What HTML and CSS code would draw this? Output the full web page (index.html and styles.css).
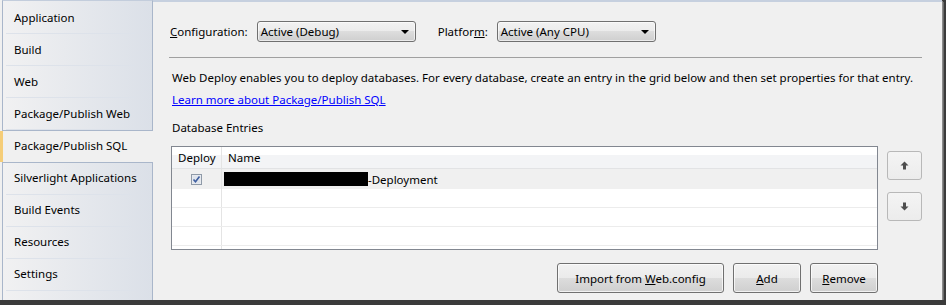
FILE: index.html
```html
<!DOCTYPE html>
<html lang="en">
  <head>
    <title>Package/Publish SQL</title>
    <link rel="stylesheet" href="styles.css">
  </head>
  <body>
    <div class="window">
      <div class="sidebar">
        <div class="tab-group first">
          <div class="tab">Application</div>
          <div class="tab">Build</div>
          <div class="tab">Web</div>
          <div class="tab">Package/Publish Web</div>
        </div>
        <div class="tab selected">Package/Publish SQL</div>
        <div class="tab-group last">
          <div class="tab">Silverlight Applications</div>
          <div class="tab">Build Events</div>
          <div class="tab">Resources</div>
          <div class="tab">Settings</div>
        </div>
      </div>

      <div class="content">
        <div class="config-row">
          <label class="config-label"><u>C</u>onfiguration:</label>
          <div class="combo config-combo">Active (Debug)<span class="combo-arrow"></span></div>
          <label class="config-label platform-label">Platfor<u>m</u>:</label>
          <div class="combo platform-combo">Active (Any CPU)<span class="combo-arrow"></span></div>
        </div>
        <div class="separator"></div>

        <p class="desc">Web Deploy enables you to deploy databases. For every database, create an entry in the grid below and then set properties for that entry.</p>
        <a class="learn-link" href="#">Learn more about Package/Publish SQL</a>
        <div class="section-label">Database Entries</div>

        <div class="grid-area">
          <div class="grid">
            <div class="grid-row header">
              <div class="cell deploy">Deploy</div>
              <div class="cell name">Name</div>
            </div>
            <div class="grid-row current">
              <div class="cell deploy">
                <svg class="checkbox" width="11" height="11" viewBox="0 0 11 11">
                  <rect x="0.5" y="0.5" width="10" height="10" fill="#eef0f3" stroke="#8f9aa8"/>
                  <rect x="1.5" y="1.5" width="8" height="8" fill="#dfe4ec"/>
                  <path d="M2.5 5.5 L4.5 7.8 L8.5 2.5" fill="none" stroke="#3f5fa0" stroke-width="1.6"/>
                </svg>
              </div>
              <div class="cell name"><span class="redacted"></span>-Deployment</div>
            </div>
            <div class="grid-row"><div class="cell deploy"></div><div class="cell name"></div></div>
            <div class="grid-row"><div class="cell deploy"></div><div class="cell name"></div></div>
            <div class="grid-row"><div class="cell deploy"></div><div class="cell name"></div></div>
            <div class="grid-row"><div class="cell deploy"></div><div class="cell name"></div></div>
          </div>
          <div class="move-buttons">
            <button class="move-btn" title="Move up">
              <svg width="9" height="9" viewBox="0 0 9 9"><path d="M4.5 0.5 L8.5 4.5 H6 V8.5 H3 V4.5 H0.5 Z" fill="#4d4d4d"/></svg>
            </button>
            <button class="move-btn" title="Move down">
              <svg width="9" height="9" viewBox="0 0 9 9"><path d="M4.5 8.5 L8.5 4.5 H6 V0.5 H3 V4.5 H0.5 Z" fill="#4d4d4d"/></svg>
            </button>
          </div>
        </div>

        <div class="actions">
          <button class="btn import-btn">Import from <u>W</u>eb.config</button>
          <button class="btn"><u>A</u>dd</button>
          <button class="btn"><u>R</u>emove</button>
        </div>
      </div>
    </div>
  </body>
</html>
```

FILE: styles.css
```css
body {
  margin: 0;
  background-color: #3b3b3b;
  font-family: "Noto Sans", "Open Sans", sans-serif;
  font-size: 11.5px;
  color: #000;
}
.window {
  width: 942px;
  height: 300px;
  display: flex;
  background-color: #f0f0f0;
  box-shadow: 1px 1px 0 #8c8c8c, 2px 2px 0 #6b6b6b;
  overflow: hidden;
}

/* left tab list */
.sidebar {
  width: 151px;
  padding-left: 2px;
  display: flex;
  flex-direction: column;
  flex-shrink: 0;
}
.tab-group {
  border-left: 1px solid #a9b6ca;
  border-right: 1px solid #a9b6ca;
  background: linear-gradient(to right, #f1f1f2, #dbe0e8);
}
.tab-group.first {
  border-top: 1px solid #c3cddc;
  border-bottom: 1px solid #a9b6ca;
  padding-top: 1px;
}
.tab-group.last {
  border-top: 1px solid #a9b6ca;
  flex: 1;
}
.tab {
  height: 31px;
  line-height: 31px;
  margin: 0 17px 0 3px;
  padding-left: 8px;
  border-bottom: 1px solid #dde2ea;
  white-space: nowrap;
}
.tab-group.last .tab {
  line-height: 30px;
}
.tab.selected {
  margin: 0 -1px 0 -2px;
  padding-left: 11px;
  border-left: 3px solid #f5cd78;
  border-bottom: none;
  background-color: #f0f0f0;
  height: 31px;
  line-height: 30px;
}

/* right page */
.content {
  flex: 1;
  border-top: 2px solid #c6d0df;
  padding: 0 20px 0 17px;
  display: flex;
  flex-direction: column;
}
.config-row {
  display: flex;
  align-items: center;
  margin-top: 19px;
  height: 21px;
}
.config-label {
  margin-right: 9px;
}
.platform-label {
  margin-left: 22px;
}
.combo {
  position: relative;
  height: 19px;
  line-height: 19px;
  padding-left: 3px;
  border: 1px solid #707070;
  border-radius: 3px;
  background: linear-gradient(#f2f2f2 0%, #ebebeb 50%, #dddddd 50%, #cfcfcf 100%);
  box-shadow: inset 0 0 0 1px rgba(255, 255, 255, 0.6);
}
.config-combo {
  width: 154px;
}
.platform-combo {
  width: 154px;
}
.combo-arrow {
  position: absolute;
  right: 6px;
  top: 8px;
  border-left: 4px solid transparent;
  border-right: 4px solid transparent;
  border-top: 4px solid #000;
}
.separator {
  margin: 15px 0 0 -1px;
  border-top: 1px solid #a0a0a0;
}
.desc {
  margin: 12px 0 0 2px;
  line-height: 16px;
}
.learn-link {
  align-self: flex-start;
  margin: 6px 0 0 2px;
  line-height: 16px;
  color: #0000ff;
}
.section-label {
  margin: 12px 0 0 2px;
  line-height: 16px;
}

/* database grid */
.grid-area {
  display: flex;
  align-items: flex-start;
  margin-top: 10px;
}
.grid {
  width: 705px;
  height: 102px;
  margin-left: 1px;
  border: 1px solid #828790;
  background-color: #fff;
  overflow: hidden;
}
.grid-row {
  display: flex;
  height: 18px;
  border-bottom: 1px solid #ececec;
}
.grid-row.header {
  height: 21px;
  line-height: 21px;
  background: linear-gradient(#fff 40%, #f3f4f6 40%);
  border-bottom: 1px solid #e2e3e5;
}
.grid-row.current {
  height: 20px;
  background-color: #f0f0f0;
  border-bottom: none;
}
.cell {
  display: flex;
  align-items: center;
}
.cell.deploy {
  width: 49px;
  border-right: 1px solid #e4e4e4;
  justify-content: center;
}
.cell.name {
  flex: 1;
  padding-left: 2px;
}
.header .cell.deploy {
  justify-content: flex-start;
  padding-left: 6px;
  width: 43px;
}
.header .cell.name {
  padding-left: 6px;
}
.redacted {
  display: inline-block;
  width: 144px;
  height: 14px;
  background-color: #000;
}
.move-buttons {
  display: flex;
  flex-direction: column;
  gap: 12px;
  margin: 5px 0 0 9px;
}
.move-btn {
  width: 35px;
  height: 29px;
  padding: 0;
  border: 1px solid #b8b8b8;
  border-radius: 3px;
  background: linear-gradient(#f4f4f4, #ececec);
  display: flex;
  align-items: center;
  justify-content: center;
}

/* bottom buttons */
.actions {
  display: flex;
  justify-content: flex-end;
  gap: 9px;
  margin: 13px 44px 0 0;
}
.btn {
  width: 68px;
  height: 30px;
  padding: 0;
  font-family: inherit;
  font-size: 11.5px;
  color: #000;
  border: 1px solid #707070;
  border-radius: 3px;
  background: linear-gradient(#f2f2f2 0%, #ebebeb 50%, #dddddd 50%, #cfcfcf 100%);
  box-shadow: inset 0 0 0 1px rgba(255, 255, 255, 0.7);
}
.import-btn {
  width: 167px;
}
```
